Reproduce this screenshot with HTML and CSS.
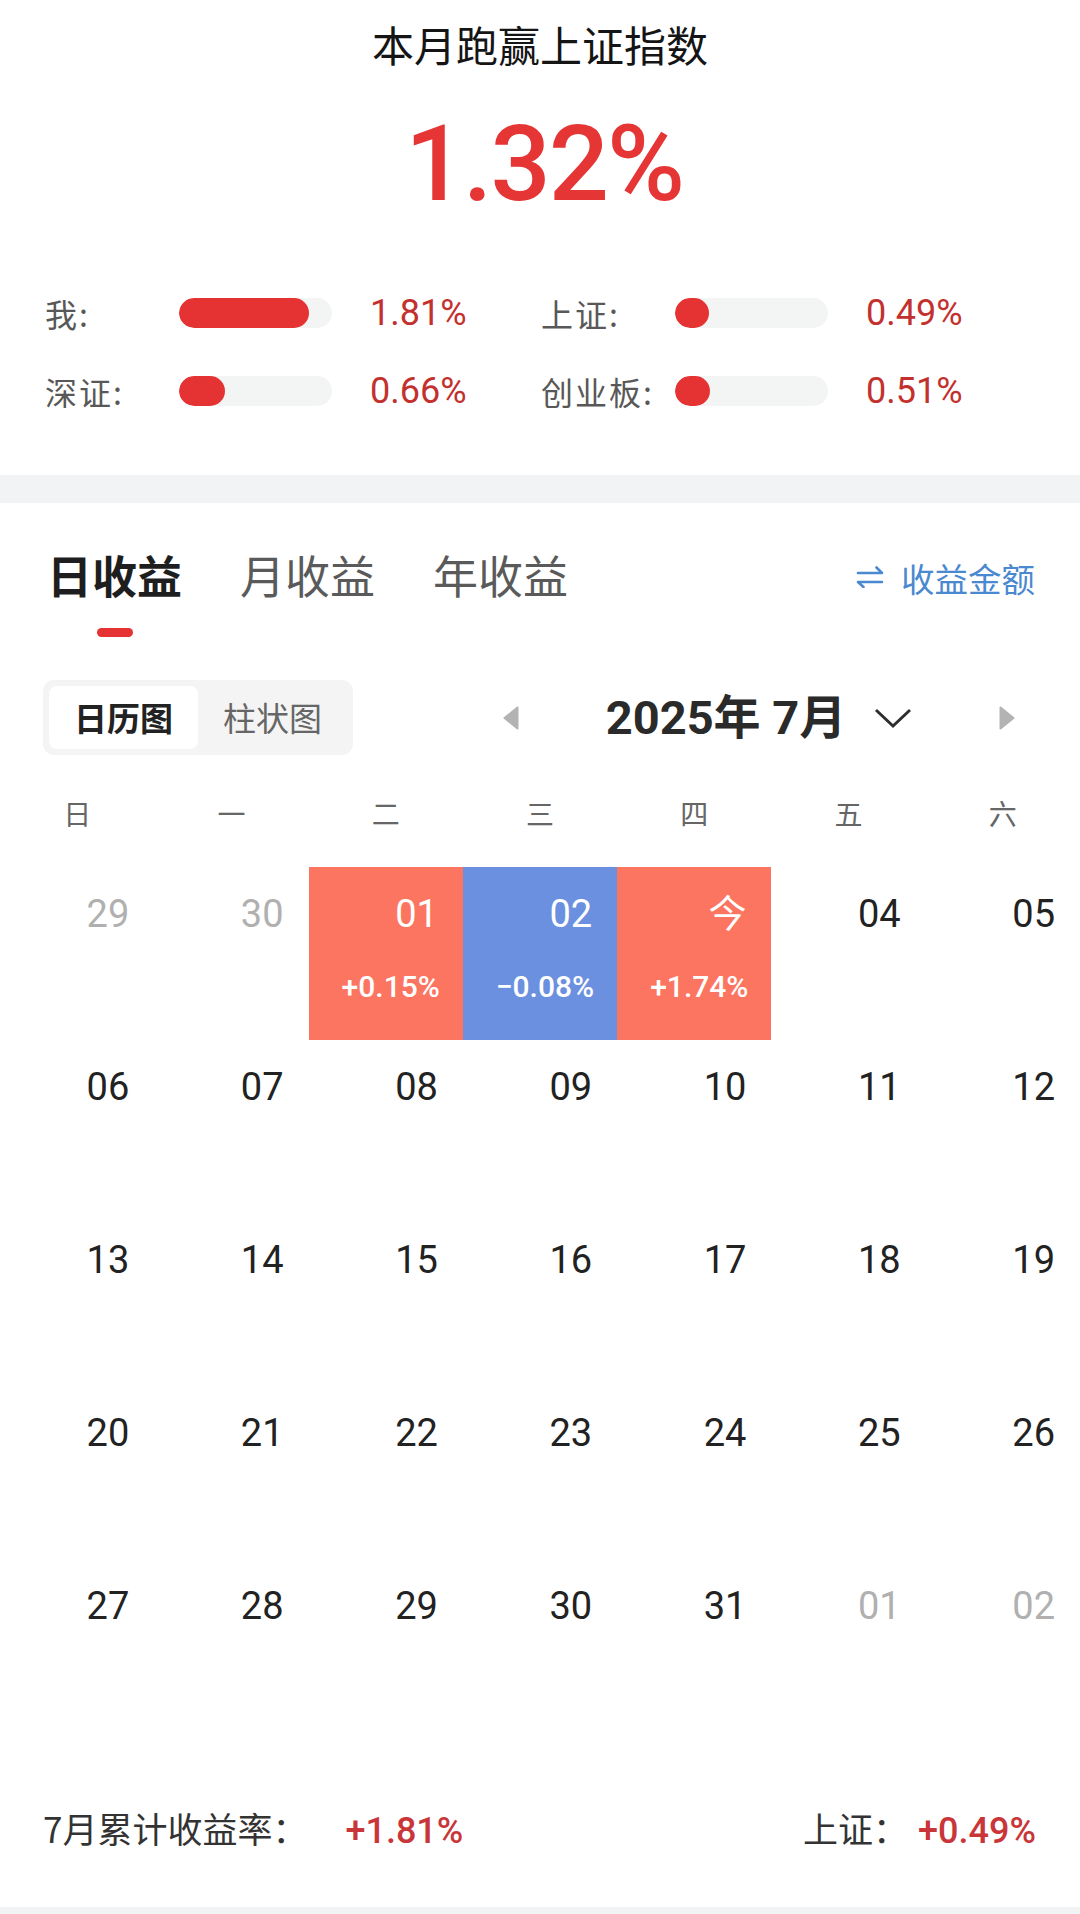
FILE: index.html
```html
<!DOCTYPE html>
<html lang="zh-CN">
<head>
<meta charset="utf-8">
<title>本月收益</title>
<link rel="stylesheet" href="styles.css">
</head>
<body>
<div class="page">
  <section class="summary">
    <h1 class="summary-title">本月跑赢上证指数</h1>
    <div class="summary-value">1.32%</div>
    <div class="compare">
      <div class="compare-item">
        <span class="compare-label">我:</span>
        <span class="bar"><span class="bar-fill" style="width:130px"></span></span>
        <span class="compare-value">1.81%</span>
      </div>
      <div class="compare-item">
        <span class="compare-label">上证:</span>
        <span class="bar"><span class="bar-fill" style="width:34px"></span></span>
        <span class="compare-value">0.49%</span>
      </div>
      <div class="compare-item">
        <span class="compare-label">深证:</span>
        <span class="bar"><span class="bar-fill" style="width:46px"></span></span>
        <span class="compare-value">0.66%</span>
      </div>
      <div class="compare-item">
        <span class="compare-label">创业板:</span>
        <span class="bar"><span class="bar-fill" style="width:35px"></span></span>
        <span class="compare-value">0.51%</span>
      </div>
    </div>
  </section>

  <div class="divider"></div>

  <section class="earnings">
    <div class="tabs">
      <div class="tab tab-active"><span>日收益</span><i class="tab-indicator"></i></div>
      <div class="tab"><span>月收益</span></div>
      <div class="tab"><span>年收益</span></div>
      <div class="switch">
        <svg class="switch-icon" viewBox="0 0 30 22" aria-hidden="true">
          <path d="M3 7 H27 L21.5 1.5" fill="none" stroke="currentColor" stroke-width="2.6" stroke-linecap="round" stroke-linejoin="round"/>
          <path d="M27 16 H3 L8.5 21" fill="none" stroke="currentColor" stroke-width="2.6" stroke-linecap="round" stroke-linejoin="round"/>
        </svg>
        <span>收益金额</span>
      </div>
    </div>

    <div class="toolbar">
      <div class="segment">
        <span class="segment-item segment-item-active">日历图</span>
        <span class="segment-item">柱状图</span>
      </div>
      <div class="month-nav">
        <svg class="nav-arrow" viewBox="0 0 18 26" aria-hidden="true">
          <path d="M15.5 2.5 L2.5 13 L15.5 23.5 Z" fill="#b3b3b3" stroke="#b3b3b3" stroke-width="2" stroke-linejoin="round"/>
        </svg>
        <div class="month-title">
          <span class="month-text">2025年 7月</span>
          <svg class="month-chevron" viewBox="0 0 38 22" aria-hidden="true">
            <polyline points="2,3 19,19 36,3" fill="none" stroke="#2e2e2e" stroke-width="3"/>
          </svg>
        </div>
        <svg class="nav-arrow" viewBox="0 0 18 26" aria-hidden="true">
          <path d="M2.5 2.5 L15.5 13 L2.5 23.5 Z" fill="#b3b3b3" stroke="#b3b3b3" stroke-width="2" stroke-linejoin="round"/>
        </svg>
      </div>
    </div>

    <div class="weekdays">
      <span>日</span><span>一</span><span>二</span><span>三</span><span>四</span><span>五</span><span>六</span>
    </div>

    <div class="calendar">
      <div class="day day-muted"><span class="day-num">29</span></div>
      <div class="day day-muted"><span class="day-num">30</span></div>
      <div class="day day-up"><span class="day-num">01</span><span class="day-rate">+0.15%</span></div>
      <div class="day day-down"><span class="day-num">02</span><span class="day-rate">−0.08%</span></div>
      <div class="day day-up"><span class="day-num">今</span><span class="day-rate">+1.74%</span></div>
      <div class="day"><span class="day-num">04</span></div>
      <div class="day"><span class="day-num">05</span></div>

      <div class="day"><span class="day-num">06</span></div>
      <div class="day"><span class="day-num">07</span></div>
      <div class="day"><span class="day-num">08</span></div>
      <div class="day"><span class="day-num">09</span></div>
      <div class="day"><span class="day-num">10</span></div>
      <div class="day"><span class="day-num">11</span></div>
      <div class="day"><span class="day-num">12</span></div>

      <div class="day"><span class="day-num">13</span></div>
      <div class="day"><span class="day-num">14</span></div>
      <div class="day"><span class="day-num">15</span></div>
      <div class="day"><span class="day-num">16</span></div>
      <div class="day"><span class="day-num">17</span></div>
      <div class="day"><span class="day-num">18</span></div>
      <div class="day"><span class="day-num">19</span></div>

      <div class="day"><span class="day-num">20</span></div>
      <div class="day"><span class="day-num">21</span></div>
      <div class="day"><span class="day-num">22</span></div>
      <div class="day"><span class="day-num">23</span></div>
      <div class="day"><span class="day-num">24</span></div>
      <div class="day"><span class="day-num">25</span></div>
      <div class="day"><span class="day-num">26</span></div>

      <div class="day"><span class="day-num">27</span></div>
      <div class="day"><span class="day-num">28</span></div>
      <div class="day"><span class="day-num">29</span></div>
      <div class="day"><span class="day-num">30</span></div>
      <div class="day"><span class="day-num">31</span></div>
      <div class="day day-muted"><span class="day-num">01</span></div>
      <div class="day day-muted"><span class="day-num">02</span></div>
    </div>

    <div class="footer">
      <div class="footer-item">
        <span class="footer-label">7月累计收益率：</span><span class="footer-value footer-value-wide">+1.81%</span>
      </div>
      <div class="footer-item">
        <span class="footer-label">上证：</span><span class="footer-value">+0.49%</span>
      </div>
    </div>
  </section>

  <div class="divider divider-bottom"></div>
</div>
</body>
</html>
```

FILE: styles.css
```css
* {
  box-sizing: border-box;
  margin: 0;
  padding: 0;
}

html,
body {
  background: #ffffff;
}

body {
  width: 1080px;
  font-family: Roboto, "Noto Sans CJK SC", sans-serif;
  color: #222222;
}

/* ---------- summary ---------- */
.summary {
  padding: 16px 0 59px;
}

.summary-title {
  font-family: "Noto Sans CJK SC", sans-serif;
  font-size: 42px;
  line-height: 56px;
  font-weight: 400;
  text-align: center;
  color: #151515;
}

.summary-value {
  margin-top: 38px;
  padding-left: 8px;
  font-size: 106px;
  line-height: 108px;
  font-weight: 500;
  letter-spacing: -2px;
  text-align: center;
  color: #e63535;
}

.compare {
  margin-top: 70px;
  padding-left: 45px;
  display: grid;
  grid-template-columns: 496px 496px;
  row-gap: 28px;
}

.compare-item {
  display: flex;
  align-items: center;
  height: 50px;
}

.compare-label {
  width: 134px;
  font-family: "Noto Sans CJK SC", sans-serif;
  font-size: 32px;
  line-height: 50px;
  letter-spacing: 2px;
  color: #585858;
}

.bar {
  display: block;
  width: 153px;
  height: 30px;
  border-radius: 15px;
  background: #f3f4f4;
  overflow: hidden;
}

.bar-fill {
  display: block;
  height: 100%;
  border-radius: 15px;
  background: #e53232;
}

.compare-value {
  margin-left: 38px;
  font-size: 36px;
  line-height: 50px;
  color: #c3312f;
}

.divider {
  height: 28px;
  background: #f2f3f5;
}

.divider-bottom {
  height: 30px;
}

/* ---------- earnings ---------- */
.earnings {
  padding-top: 42px;
}

.tabs {
  display: flex;
  align-items: flex-start;
  padding: 0 45px 0 47px;
}

.tab {
  display: flex;
  flex-direction: column;
  align-items: center;
  margin-right: 58px;
  font-family: "Noto Sans CJK SC", sans-serif;
  font-size: 45px;
  line-height: 60px;
  color: #5a5a5a;
}

.tab-active {
  font-weight: 700;
  color: #1e1e1e;
}

.tab-indicator {
  display: block;
  width: 36px;
  height: 9px;
  margin-top: 23px;
  border-radius: 5px;
  background: #e53232;
}

.switch {
  margin-left: auto;
  margin-top: 2px;
  display: flex;
  align-items: center;
  height: 60px;
  font-family: "Noto Sans CJK SC", sans-serif;
  font-size: 33.5px;
  color: #4a88d0;
}

.switch-icon {
  width: 30px;
  height: 22px;
  margin-right: 16px;
}

.toolbar {
  display: flex;
  align-items: center;
  margin-top: 43px;
  padding: 0 64px 0 43px;
}

.segment {
  display: flex;
  padding: 6px;
  background: #f4f4f4;
  border-radius: 11px;
}

.segment-item {
  width: 149px;
  height: 63px;
  line-height: 63px;
  text-align: center;
  font-family: "Noto Sans CJK SC", sans-serif;
  font-size: 33px;
  color: #666666;
  border-radius: 8px;
}

.segment-item-active {
  background: #ffffff;
  color: #222222;
  font-weight: 700;
}

.month-nav {
  margin-left: auto;
  width: 514px;
  display: flex;
  align-items: center;
  justify-content: space-between;
}

.nav-arrow {
  width: 18px;
  height: 26px;
}

.month-title {
  display: flex;
  align-items: center;
}

.month-text {
  font-size: 47px;
  line-height: 60px;
  font-weight: 700;
  color: #2a2a2a;
}

.month-chevron {
  width: 38px;
  height: 22px;
  margin-left: 28px;
}

.weekdays {
  margin-top: 38px;
  display: grid;
  grid-template-columns: repeat(7, 1fr);
  font-family: "Noto Sans CJK SC", sans-serif;
  font-size: 28px;
  line-height: 40px;
  color: #666666;
  text-align: center;
}

.calendar {
  margin-top: 34px;
  display: grid;
  grid-template-columns: repeat(7, 1fr);
  grid-auto-rows: 173px;
}

.day {
  display: flex;
  flex-direction: column;
  align-items: flex-end;
  padding: 25px 25px 0 0;
  color: #222222;
}

.day-num {
  font-size: 38px;
  line-height: 44px;
}

.day-rate {
  margin-top: 33px;
  margin-right: -2px;
  font-size: 30px;
  line-height: 36px;
  font-weight: 500;
}

.day-muted {
  color: #b0b0b0;
}

.day-up {
  background: #fc7561;
  color: #ffffff;
}

.day-down {
  background: #6c90e0;
  color: #ffffff;
}

.footer {
  margin-top: 71px;
  padding: 0 44px 44px 43px;
  display: flex;
  justify-content: space-between;
  align-items: baseline;
  line-height: 50px;
}

.footer-label {
  font-family: "Noto Sans CJK SC", sans-serif;
  font-size: 35px;
  color: #333333;
}

.footer-value {
  margin-left: 10px;
  font-size: 36px;
  font-weight: 500;
  color: #c9363a;
}

.footer-value-wide {
  margin-left: 38px;
}
```
